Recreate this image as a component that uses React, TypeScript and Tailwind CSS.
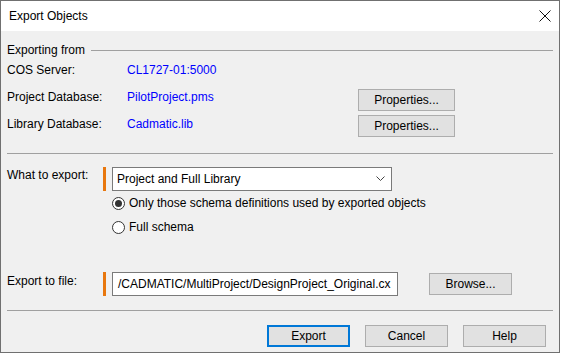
const font = { fontFamily: '"Liberation Sans", Arial, sans-serif' }

function Btn({ label, primary = false, className = '' }: { label: string; primary?: boolean; className?: string }) {
  return (
    <div
      className={`flex items-center justify-center bg-[#e1e1e1] text-[12px] text-black ${
        primary ? 'border-2 border-[#0078d7]' : 'border border-[#adadad]'
      } ${className}`}
    >
      {label}
    </div>
  )
}

function Radio({ checked, label }: { checked?: boolean; label: string }) {
  return (
    <div className="flex h-[24px] items-center">
      <div className="flex h-[13px] w-[13px] items-center justify-center rounded-full border border-[#333] bg-white">
        {checked && <div className="h-[7px] w-[7px] rounded-full bg-[#333]" />}
      </div>
      <span className="ml-[4px] text-[12px] leading-[14px] text-black">{label}</span>
    </div>
  )
}

function Separator({ className = '' }: { className?: string }) {
  return <div className={`ml-[6px] mr-[6px] h-px bg-[#a0a0a0] ${className}`} />
}

export default function App() {
  return (
    <div className="h-[354px] w-[562px] bg-white" style={font}>
      <div className="flex h-[353px] w-[560px] flex-col border border-[#707070] bg-[#f0f0f0]">
        {/* title bar */}
        <div className="flex h-[30px] shrink-0 items-center justify-between bg-white pl-[8px] pr-[7px]">
          <span className="text-[12px] text-black">Export Objects</span>
          <svg width="12" height="12" viewBox="0 0 12 12" className="mr-[1px]">
            <path d="M0.5 0.5 L11.5 11.5 M11.5 0.5 L0.5 11.5" stroke="#111" strokeWidth="1" fill="none" />
          </svg>
        </div>

        {/* exporting from */}
        <div className="mt-[12px] flex h-[14px] items-center pl-[6px] pr-[6px]">
          <span className="text-[12px] leading-[14px] text-black">Exporting from</span>
          <div className="ml-[6px] h-px flex-1 bg-[#a0a0a0]" />
        </div>

        <div className="flex flex-col pl-[6px] text-[12px] leading-[14px]">
          <div className="flex h-[27px] items-start">
            <span className="w-[120px] pt-[6px] text-black">COS Server:</span>
            <span className="pt-[6px] text-[#0000ff]">CL1727-01:5000</span>
          </div>
          <div className="flex h-[27px] items-start">
            <span className="w-[120px] pt-[6px] text-black">Project Database:</span>
            <span className="w-[231px] pt-[6px] text-[#0000ff]">PilotProject.pms</span>
            <Btn label="Properties..." className="mt-[5px] h-[22px] w-[97px]" />
          </div>
          <div className="flex h-[27px] items-start">
            <span className="w-[120px] pt-[6px] text-black">Library Database:</span>
            <span className="w-[231px] pt-[6px] text-[#0000ff]">Cadmatic.lib</span>
            <Btn label="Properties..." className="mt-[4px] h-[22px] w-[97px]" />
          </div>
        </div>

        <Separator className="mt-[15px]" />

        {/* what to export */}
        <div className="mt-[13px] flex items-start pl-[6px]">
          <span className="w-[96px] pt-[1px] text-[12px] leading-[14px] text-black">What to export:</span>
          <div className="h-[24px] w-[3px] bg-[#e8770e]" />
          <div className="ml-[6px] flex flex-col">
            <div className="flex h-[24px] w-[280px] items-center justify-between border border-[#7a7a7a] bg-white pl-[4px] pr-[6px]">
              <span className="text-[12px] text-black">Project and Full Library</span>
              <svg width="9" height="6" viewBox="0 0 9 6">
                <path d="M0.5 0.5 L4.5 4.5 L8.5 0.5" stroke="#444" strokeWidth="1" fill="none" />
              </svg>
            </div>
            <Radio checked label="Only those schema definitions used by exported objects" />
            <Radio label="Full schema" />
          </div>
        </div>

        {/* export to file */}
        <div className="mt-[33px] flex items-start pl-[6px]">
          <span className="w-[96px] pt-[2px] text-[12px] leading-[14px] text-black">Export to file:</span>
          <div className="h-[24px] w-[3px] bg-[#e8770e]" />
          <div className="ml-[6px] flex h-[24px] w-[286px] items-center overflow-hidden whitespace-nowrap border border-[#7a7a7a] bg-white pl-[5px]">
            <span className="text-[12px] text-black">/CADMATIC/MultiProject/DesignProject_Original.cx</span>
          </div>
          <Btn label="Browse..." className="ml-[31px] mt-[1px] h-[22px] w-[83px]" />
        </div>

        <Separator className="mt-[14px]" />

        {/* buttons */}
        <div className="mt-[14px] flex justify-end gap-[15px] pr-[13px]">
          <Btn label="Export" primary className="h-[22px] w-[83px]" />
          <Btn label="Cancel" className="h-[22px] w-[83px]" />
          <Btn label="Help" className="h-[22px] w-[83px]" />
        </div>
      </div>
    </div>
  )
}
